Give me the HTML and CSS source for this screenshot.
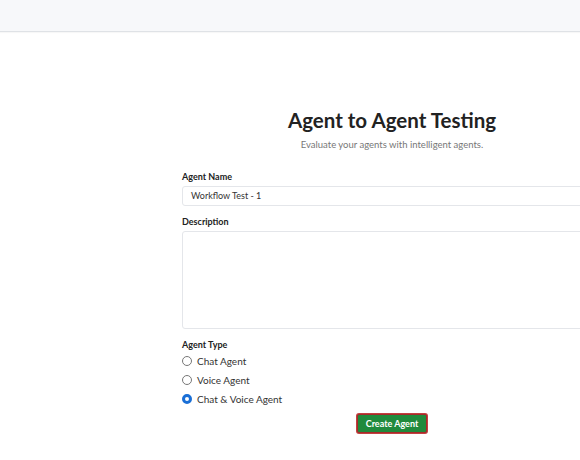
FILE: index.html
```html
<!DOCTYPE html>
<html>
<head>
<meta charset="utf-8">
<link rel="stylesheet" href="styles.css">
</head>
<body>
<header class="topbar"></header>
<main class="page">
  <section class="panel">
    <h1 class="title">Agent to Agent Testing</h1>
    <p class="subtitle">Evaluate your agents with intelligent agents.</p>
    <div class="field">
      <label class="label">Agent Name</label>
      <div class="input">Workflow Test - 1</div>
    </div>
    <div class="field">
      <label class="label">Description</label>
      <div class="textarea"></div>
    </div>
    <div class="field types">
      <label class="label">Agent Type</label>
      <div class="radio"><span class="dot"></span>Chat Agent</div>
      <div class="radio"><span class="dot"></span>Voice Agent</div>
      <div class="radio"><span class="dot on"></span>Chat &amp; Voice Agent</div>
    </div>
    <div class="actions">
      <button class="btn">Create Agent</button>
    </div>
  </section>
</main>
</body>
</html>
```
FILE: styles.css
```css
html, body { margin: 0; padding: 0; }
body {
  background: #fff;
  font-family: "Lato", "Open Sans", sans-serif;
  color: #212529;
  width: 580px;
  height: 460px;
  overflow: hidden;
}
.topbar {
  height: 31px;
  background: #f7f8fa;
  border-bottom: 1px solid #dfe2e6;
  box-shadow: 0 1px 1px rgba(0,0,0,0.03);
}
.page {
  padding-left: 182px;
  padding-top: 74px;
}
.panel {
  width: 420px;
}
.title {
  margin: 0;
  text-align: center;
  font-size: 20.5px;
  font-weight: 700;
  line-height: 28px;
  color: #222;
}
.subtitle {
  margin: 4px 0 0;
  text-align: center;
  font-size: 9.5px;
  color: #777;
  line-height: 14px;
}
.field { margin-top: 19px; }
.field + .field { margin-top: 10px; }
.label {
  display: block;
  font-size: 9px;
  font-weight: 700;
  color: #222;
  line-height: 12px;
  margin-bottom: 3px;
}
.input {
  height: 18px;
  border: 1px solid #e4e6ea;
  border-radius: 3px;
  padding: 0 8px;
  font-size: 9px;
  line-height: 18px;
  color: #333;
}
.textarea {
  height: 96px;
  border: 1px solid #e4e6ea;
  border-radius: 3px;
}
.types { margin-top: 13px; }
.types .label { margin-bottom: 0; }
.radio {
  display: flex;
  align-items: center;
  gap: 5px;
  height: 19px;
  font-size: 10px;
  color: #333;
}
.dot {
  width: 8px;
  height: 8px;
  border: 1px solid #777;
  border-radius: 50%;
  box-sizing: content-box;
}
.dot.on {
  width: 4px;
  height: 4px;
  border: 3px solid #1a6fd6;
}
.actions {
  display: flex;
  justify-content: center;
  margin-top: 6px;
}
.btn {
  font-family: inherit;
  background: #208a3c;
  color: #fff;
  font-size: 9px;
  font-weight: 700;
  border: 1px solid #a62a2a;
  box-shadow: 0 0 0 1px #c24040;
  border-radius: 2px;
  height: 19px;
  padding: 0 8px;
  cursor: pointer;
}
```
